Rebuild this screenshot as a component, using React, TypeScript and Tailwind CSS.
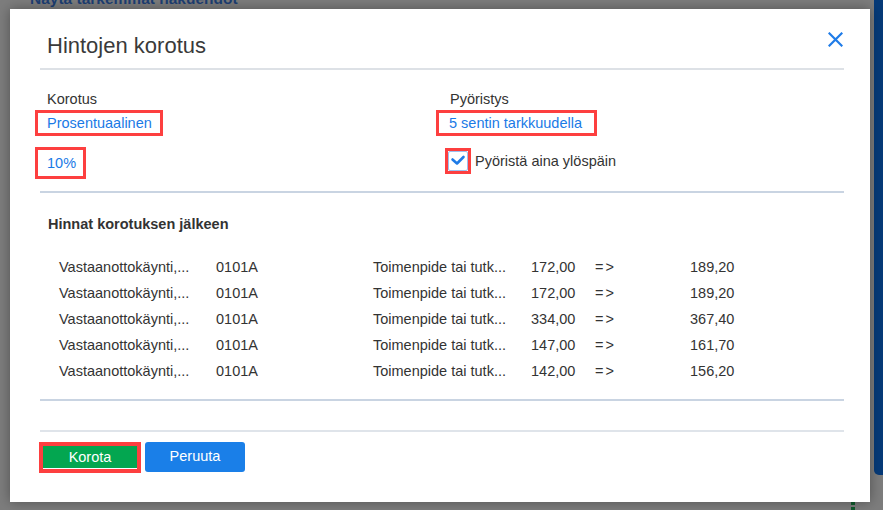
import React from 'react';

const rows = [
  { name: 'Vastaanottokäynti,...', code: '0101A', type: 'Toimenpide tai tutk...', old: '172,00', next: '189,20' },
  { name: 'Vastaanottokäynti,...', code: '0101A', type: 'Toimenpide tai tutk...', old: '172,00', next: '189,20' },
  { name: 'Vastaanottokäynti,...', code: '0101A', type: 'Toimenpide tai tutk...', old: '334,00', next: '367,40' },
  { name: 'Vastaanottokäynti,...', code: '0101A', type: 'Toimenpide tai tutk...', old: '147,00', next: '161,70' },
  { name: 'Vastaanottokäynti,...', code: '0101A', type: 'Toimenpide tai tutk...', old: '142,00', next: '156,20' },
];

function CloseIcon() {
  return (
    <svg width="15" height="15" viewBox="0 0 15 15" fill="none">
      <path d="M1.5 1.5 L13.5 13.5 M13.5 1.5 L1.5 13.5" stroke="#1f7ce8" strokeWidth="2.2" strokeLinecap="square" />
    </svg>
  );
}

export default function App() {
  return (
    <div className="relative h-[510px] w-[883px] overflow-hidden bg-[#7d7d7d] font-['Liberation_Sans',Arial,sans-serif] text-[#333]">
      {/* page behind the dialog */}
      <div className="flex h-full">
        <div className="flex-1">
          <p className="-mt-[11px] ml-[30px] text-[15.5px] leading-[20px] font-semibold text-[#1d3f73]">Näytä tarkemmat hakuehdot</p>
        </div>
        <div className="h-[475px] w-[9px] rounded-bl-[5px] bg-[#063a78]" />
      </div>
      <div className="absolute left-[851px] top-[502px] flex flex-col gap-[2px]">
        <div className="h-[3px] w-[4px] bg-[#0f5a2c]" />
        <div className="h-[3px] w-[4px] bg-[#0f5a2c]" />
      </div>

      {/* dialog */}
      <div className="absolute inset-0 pl-[10px] pt-[9px]">
        <div className="flex h-[493px] w-[860px] flex-col bg-white pl-[30px] pr-[26px] shadow-[0_0_12px_rgba(0,0,0,0.35)]">
          <div className="flex items-start justify-between pt-[22px] pb-[7px]">
            <h1 className="ml-[7px] text-[22px] leading-[30px] text-[#3a3a3a]">Hintojen korotus</h1>
            <button className="mt-[1px] mr-[1px]">
              <CloseIcon />
            </button>
          </div>
          <div className="h-[2px] bg-[#dde1e6]" />

          <div className="mt-[19px] grid grid-cols-[403px_1fr] pl-[7px] text-[14.5px] leading-[20px]">
            <div className="flex flex-col items-start">
              <span>Korotus</span>
              <span className="-ml-[12px] mt-[1px] border-[3px] border-[#fd3f3f] pl-[9px] pr-[8px] text-[#1a7ae6]">Prosentuaalinen</span>
              <span className="-ml-[12px] mt-[11px] border-[3px] border-[#fd3f3f] pl-[9px] pr-[7px] leading-[26px] text-[#1a7ae6]">10%</span>
            </div>
            <div className="flex flex-col items-start">
              <span>Pyöristys</span>
              <span className="-ml-[14px] mt-[1px] border-[3px] border-[#fd3f3f] pl-[10px] pr-[12px] text-[#1a7ae6]">5 sentin tarkkuudella</span>
              <div className="mt-[12px] -ml-[5px] flex items-center">
                <div className="border-[3px] border-[#fd3f3f]">
                  <div className="flex h-[20px] w-[20px] items-center justify-center rounded-[2px] border-[1.5px] border-[#9cc0ef] bg-white">
                    <svg width="16" height="16" viewBox="0 0 16 16" fill="none">
                      <path d="M2.5 6.5 L7 10.5 L13.5 4" stroke="#1f7be6" strokeWidth="2.6" strokeLinecap="round" strokeLinejoin="round" />
                    </svg>
                  </div>
                </div>
                <span className="ml-[4px]">Pyöristä aina ylöspäin</span>
              </div>
            </div>
          </div>

          <div className="mt-[12px] h-[2px] bg-[#c9d4e2]" />

          <h2 className="mt-[21px] pl-[8px] text-[14.5px] leading-[20px] font-bold text-[#333]">Hinnat korotuksen jälkeen</h2>

          <div className="mt-[20px] flex flex-col pl-[19px] text-[14.5px] leading-[26px]">
            {rows.map((r, i) => (
              <div key={i} className="grid grid-cols-[157px_157px_158px_64px_95px_1fr]">
                <span>{r.name}</span>
                <span>{r.code}</span>
                <span>{r.type}</span>
                <span>{r.old}</span>
                <span className="tracking-[2px]">=&gt;</span>
                <span>{r.next}</span>
              </div>
            ))}
          </div>

          <div className="mt-[15px] h-[2px] bg-[#c9d4e2]" />
          <div className="mt-[29px] h-[2px] bg-[#dfe4ea]" />

          <div className="-ml-[1px] mt-[10px] flex gap-[4px] text-[14.5px] text-white">
            <div className="border-[4px] border-[#fd3f3f]">
              <button className="h-[22px] w-[94px] bg-[#03a650] leading-[22px]">Korota</button>
            </div>
            <button className="h-[30px] w-[100px] rounded-[3px] bg-[#1a7fe8]">Peruuta</button>
          </div>
        </div>
      </div>
    </div>
  );
}
